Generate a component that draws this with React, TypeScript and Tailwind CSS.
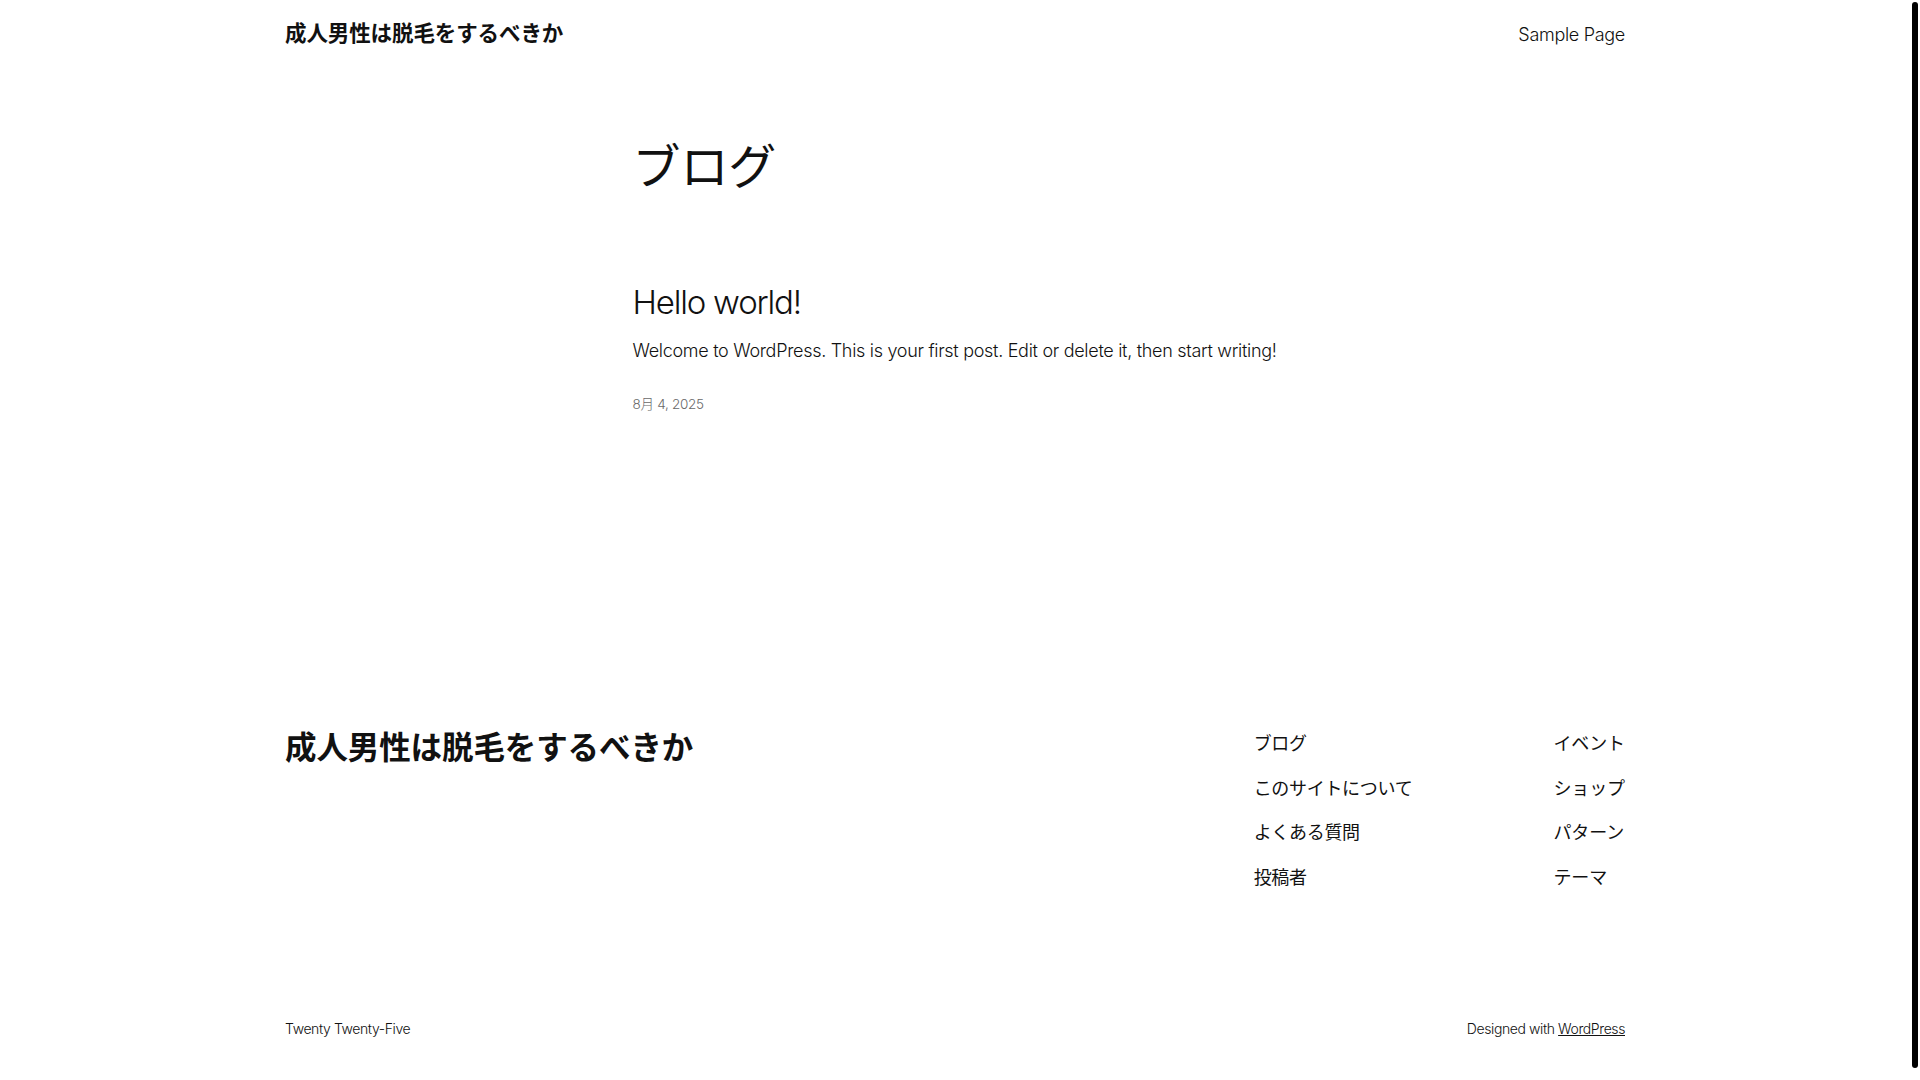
const font = "font-['Inter','Noto_Sans_CJK_JP',sans-serif]";

const navLeft = ["ブログ", "このサイトについて", "よくある質問", "投稿者"];
const navRight = ["イベント", "ショップ", "パターン", "テーマ"];

export default function App() {
  return (
    <div className={`${font} bg-white text-[#111111] w-[1910px] min-h-[1080px] tracking-[-0.1px]`}>
      {/* Header */}
      <header className="w-[1340px] mx-auto h-[68px] flex items-center justify-between">
        <a className="text-[21.5px] font-bold leading-none">成人男性は脱毛をするべきか</a>
        <a className="text-[18px] font-light tracking-[-0.3px]">Sample Page</a>
      </header>

      {/* Main */}
      <main className="w-[645px] mx-auto">
        <h1 className="mt-[70px] text-[48px] leading-[58px] font-normal">ブログ</h1>

        <article>
          <h2 className="mt-[83px] text-[33px] leading-[46px] font-light tracking-[-1.2px]">Hello world!</h2>
          <p className="mt-[12px] text-[18px] leading-[28px] font-light tracking-[-0.3px] whitespace-nowrap">
            Welcome to WordPress. This is your first post. Edit or delete it, then start writing!
          </p>
          <div className="mt-[29px] text-[13.5px] leading-[20px] font-light text-[#686868] tracking-[-0.3px]">8月 4, 2025</div>
        </article>
      </main>

      {/* Footer */}
      <footer className="w-[1340px] mx-auto mt-[314px]">
        <div className="flex justify-between items-start">
          <div className="text-[31.5px] leading-[40px] font-bold">成人男性は脱毛をするべきか</div>
          <div className="flex gap-[141px] pt-[3px]">
            <nav className="flex flex-col gap-[19.5px]">
              {navLeft.map((n) => (
                <a key={n} className="text-[18px] leading-[25px] tracking-[-0.3px]">{n}</a>
              ))}
            </nav>
            <nav className="flex flex-col gap-[19.5px]">
              {navRight.map((n) => (
                <a key={n} className="text-[18px] leading-[25px]">{n}</a>
              ))}
            </nav>
          </div>
        </div>

        <div className="mt-[129px] flex justify-between text-[14px] leading-[20px] font-light tracking-[-0.4px]">
          <span>Twenty Twenty-Five</span>
          <span>
            Designed with <a className="underline">WordPress</a>
          </span>
        </div>
      </footer>

      {/* scrollbar thumb */}
      <div className="fixed right-[2px] top-[2px] bottom-[12px] w-[6px] rounded-full bg-black" />
    </div>
  );
}
